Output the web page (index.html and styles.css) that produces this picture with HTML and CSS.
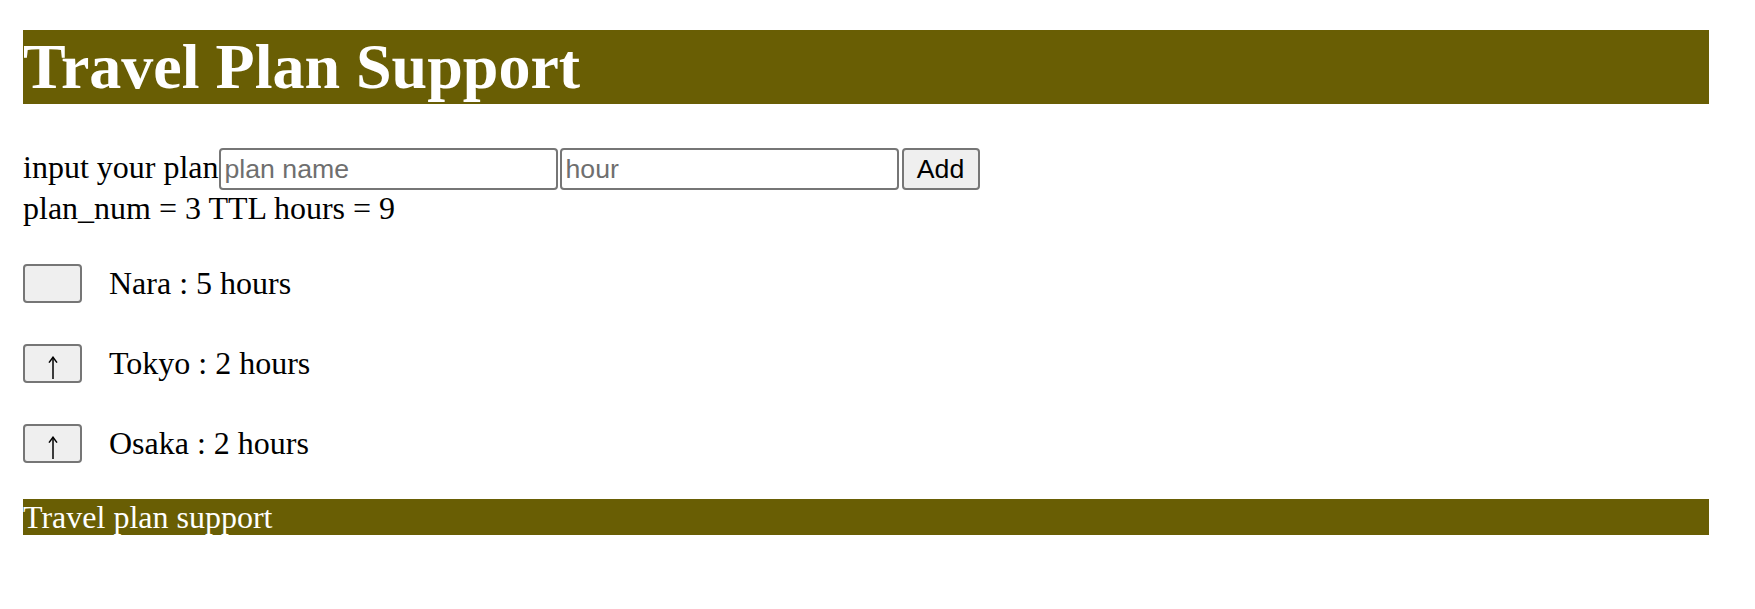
FILE: index.html
```html
<!DOCTYPE html>
<html lang="en">
<head>
<meta charset="utf-8">
<title>Travel Plan Support</title>
<link rel="stylesheet" href="styles.css">
</head>
<body>
<div class="page">
<h1 class="title">Travel Plan Support</h1>
<div class="plan-form"><span class="label">input your plan</span><input class="field" type="text" placeholder="plan name"><input class="field field-hour" type="text" placeholder="hour"><button class="add-btn" type="button">Add</button></div>
<div class="summary">plan_num = 3 TTL hours = 9</div>
<div class="plans">
<div class="plan-row"><button class="up-btn" type="button"></button><span class="plan-text">Nara : 5 hours</span></div>
<div class="plan-row"><button class="up-btn" type="button" aria-label="↑"><svg class="arrow" viewBox="0 0 10 23" width="10" height="23" aria-hidden="true"><path d="M5 1.2V23" /><path d="M1 6.6L5 1.2L9 6.6" /></svg></button><span class="plan-text">Tokyo : 2 hours</span></div>
<div class="plan-row"><button class="up-btn" type="button" aria-label="↑"><svg class="arrow" viewBox="0 0 10 23" width="10" height="23" aria-hidden="true"><path d="M5 1.2V23" /><path d="M1 6.6L5 1.2L9 6.6" /></svg></button><span class="plan-text">Osaka : 2 hours</span></div>
</div>
<footer class="footer">Travel plan support</footer>
</div>
</body>
</html>
```
FILE: styles.css
```css
html, body {
  margin: 0;
  padding: 0;
  background: #ffffff;
}

body {
  font-family: "Liberation Serif", "Times New Roman", serif;
  font-size: 32px;
  color: #000000;
}

.page {
  padding: 30px 46px 0 23px;
}

.title {
  margin: 0;
  height: 74px;
  line-height: 74px;
  font-size: 64px;
  font-weight: 700;
  color: #ffffff;
  background: #695e04;
  white-space: nowrap;
}

.plan-form {
  display: flex;
  align-items: baseline;
  margin-top: 44px;
}

.label {
  line-height: normal;
}

.field {
  box-sizing: border-box;
  width: 339px;
  height: 42px;
  margin: 0;
  padding: 2px 4px;
  border: 2px solid #767676;
  border-radius: 4px;
  font-family: "Liberation Sans", Arial, sans-serif;
  font-size: 26.67px;
  color: #000000;
  background: #ffffff;
}

.field::placeholder {
  color: #6f6f6f;
}

.field-hour {
  margin-left: 2px;
}

.add-btn {
  box-sizing: border-box;
  width: 78px;
  height: 42px;
  margin: 0 0 0 3px;
  padding: 0 10px;
  border: 2px solid #767676;
  border-radius: 4px;
  background: #efefef;
  font-family: "Liberation Sans", Arial, sans-serif;
  font-size: 26.67px;
  color: #000000;
}

.summary {
  line-height: normal;
}

.plans {
  display: flex;
  flex-direction: column;
  gap: 41px;
  margin-top: 37px;
}

.plan-row {
  display: flex;
  align-items: center;
  height: 39px;
}

.up-btn {
  box-sizing: border-box;
  width: 59px;
  height: 39px;
  margin: 0;
  padding: 8px 0 0;
  border: 2px solid #767676;
  border-radius: 4px;
  background: #efefef;
  font-family: "Liberation Sans", Arial, sans-serif;
  font-size: 26.67px;
  color: #000000;
}

.arrow {
  display: block;
  margin: 0 auto;
  fill: none;
  stroke: #000000;
  stroke-width: 1.5;
  stroke-linejoin: miter;
}

.plan-text {
  margin-left: 27px;
  line-height: normal;
}

.footer {
  margin-top: 36px;
  height: 36px;
  line-height: 36px;
  color: #ffffff;
  background: #695e04;
}
```
